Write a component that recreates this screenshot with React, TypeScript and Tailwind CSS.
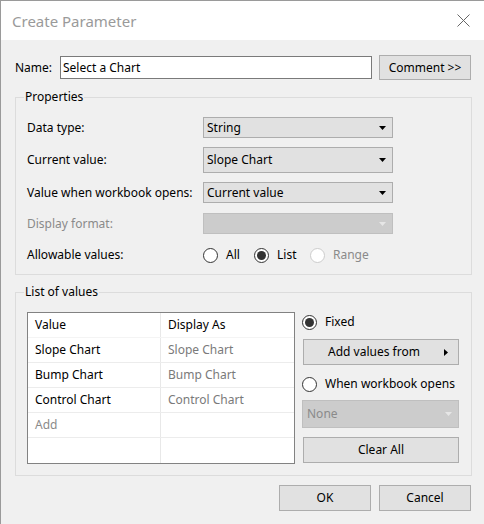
import React from "react";

const FONT = { fontFamily: '"Noto Sans", "Open Sans", Arial, sans-serif' };

function Arrow({ disabled }: { disabled?: boolean }) {
  return (
    <svg width="7" height="4" viewBox="0 0 7 4" className="shrink-0">
      <path d="M0 0H7L3.5 4Z" fill={disabled ? "#e6e6e6" : "#000000"} />
    </svg>
  );
}

function Select({ value, disabled, tall }: { value?: string; disabled?: boolean; tall?: boolean }) {
  return (
    <div
      className={
        "w-[190px] flex items-center justify-between pl-[3px] pr-[6px] border " +
        (tall ? "h-[26px] " : "h-[21px] ") +
        (disabled ? "bg-[#cccccc] border-[#bfbfbf]" : "bg-[#e1e1e1] border-[#adadad]")
      }
    >
      <span className="text-black">{value}</span>
      <Arrow disabled={disabled} />
    </div>
  );
}

function Radio({ checked, disabled }: { checked?: boolean; disabled?: boolean }) {
  return (
    <span
      className={
        "w-[15px] h-[15px] rounded-full border bg-white flex items-center justify-center shrink-0 " +
        (disabled ? "border-[#cccccc]" : "border-[#333333]")
      }
    >
      {checked && <span className="w-[9px] h-[9px] rounded-full bg-[#333333]" />}
    </span>
  );
}

function Button({ children, className }: { children: React.ReactNode; className?: string }) {
  return (
    <div
      className={
        "flex items-center justify-center bg-[#e1e1e1] border border-[#adadad] text-black " + (className || "")
      }
    >
      {children}
    </div>
  );
}

function Row({ label, children, gray, className }: { label: string; children: React.ReactNode; gray?: boolean; className?: string }) {
  return (
    <div className={"flex items-center " + (className || "")}>
      <span className={"w-[176px] " + (gray ? "text-[#8a8a8a]" : "text-black")}>{label}</span>
      {children}
    </div>
  );
}

export default function App() {
  const rows = [
    ["Slope Chart", "Slope Chart"],
    ["Bump Chart", "Bump Chart"],
    ["Control Chart", "Control Chart"],
  ];
  return (
    <div
      className="w-[484px] h-[524px] bg-[#f0f0f0] border-l border-t border-[#9a9a9a] flex flex-col overflow-hidden text-[12px] leading-[16px] text-black"
      style={FONT}
    >
      {/* title bar */}
      <div className="h-[39px] bg-white flex items-center justify-between pl-[11px] pr-[14px] shrink-0">
        <span className="text-[15px] leading-[20px] text-[#9a9a9a]">Create Parameter</span>
        <svg width="13" height="13" viewBox="0 0 13 13">
          <path d="M0.5 0.5L12.5 12.5M12.5 0.5L0.5 12.5" stroke="#666666" strokeWidth="1" />
        </svg>
      </div>

      <div className="flex flex-col pl-[14px] pt-[15px]">
        {/* name row */}
        <div className="flex items-center h-[25px]">
          <span className="w-[45px]">Name:</span>
          <div className="w-[312px] h-[23px] bg-white border border-[#7a7a7a] flex items-center pl-[2px]">
            Select a Chart
          </div>
          <Button className="ml-[7px] w-[92px] h-[25px]">Comment &gt;&gt;</Button>
        </div>

        {/* properties */}
        <fieldset className="mt-[9px] w-[457px] border border-[#dcdcdc] pl-[11px] pt-[12px] pb-[11px]">
          <legend className="ml-[-3px] px-[1px]">Properties</legend>
          <Row label="Data type:" className="h-[21px]">
            <Select value="String" />
          </Row>
          <Row label="Current value:" className="h-[26px] mt-[9px]">
            <Select value="Slope Chart" tall />
          </Row>
          <Row label="Value when workbook opens:" className="h-[21px] mt-[9px]">
            <Select value="Current value" />
          </Row>
          <Row label="Display format:" gray className="h-[21px] mt-[10px]">
            <Select disabled />
          </Row>
          <Row label="Allowable values:" className="h-[16px] mt-[13px]">
            <div className="flex items-center">
              <div className="w-[51px] flex items-center gap-[8px]">
                <Radio />
                <span>All</span>
              </div>
              <div className="w-[56px] flex items-center gap-[8px]">
                <Radio checked />
                <span>List</span>
              </div>
              <div className="flex items-center gap-[8px]">
                <Radio disabled />
                <span className="text-[#8a8a8a]">Range</span>
              </div>
            </div>
          </Row>
        </fieldset>

        {/* list of values */}
        <fieldset className="mt-[9px] w-[457px] border border-[#dcdcdc] pl-[11px] pt-[12px] pb-[11px]">
          <legend className="ml-[-3px] px-[1px]">List of values</legend>
          <div className="flex items-start">
            <div className="w-[268px] border border-[#828282] bg-white flex flex-col">
              <div className="flex h-[25px] border-b border-[#f4f4f4]">
                <div className="w-[133px] flex items-center pl-[7px] border-r border-[#e8e8e8]">Value</div>
                <div className="flex-1 flex items-center pl-[7px]">Display As</div>
              </div>
              {rows.map(([a, b]) => (
                <div key={a} className="flex h-[25px] border-b border-[#ececec]">
                  <div className="w-[133px] flex items-center pl-[7px] border-r border-[#e8e8e8]">{a}</div>
                  <div className="flex-1 flex items-center pl-[7px] text-[#7a7a7a]">{b}</div>
                </div>
              ))}
              <div className="flex h-[25px] border-b border-[#ececec]">
                <div className="w-[133px] flex items-center pl-[7px] border-r border-[#e8e8e8] text-[#8a8a8a]">Add</div>
                <div className="flex-1" />
              </div>
              <div className="flex h-[25px]">
                <div className="w-[133px] border-r border-[#e8e8e8]" />
                <div className="flex-1" />
              </div>
            </div>

            <div className="ml-[7px] w-[157px] flex flex-col">
              <div className="h-[20px] flex items-center gap-[8px]">
                <Radio checked />
                <span>Fixed</span>
              </div>
              <Button className="mt-[7px] ml-[1px] w-[156px] h-[26px] relative">
                <span className="pr-[14px]">Add values from</span>
                <svg width="4" height="7" viewBox="0 0 4 7" className="absolute right-[10px] top-[9px]">
                  <path d="M0 0L4 3.5L0 7Z" fill="#000000" />
                </svg>
              </Button>
              <div className="mt-[9px] h-[20px] flex items-center gap-[8px]">
                <Radio />
                <span>When workbook opens</span>
              </div>
              <div className="mt-[6px] w-[157px] h-[28px] bg-[#cccccc] border border-[#bfbfbf] flex items-center justify-between pl-[4px] pr-[6px]">
                <span className="text-[#8a8a8a]">None</span>
                <Arrow disabled />
              </div>
              <Button className="mt-[9px] ml-[1px] w-[156px] h-[26px]">Clear All</Button>
            </div>
          </div>
        </fieldset>

        <div className="mt-[9px] flex justify-end pr-[13px] gap-[8px]">
          <Button className="w-[92px] h-[26px]">OK</Button>
          <Button className="w-[92px] h-[26px]">Cancel</Button>
        </div>
      </div>
    </div>
  );
}
